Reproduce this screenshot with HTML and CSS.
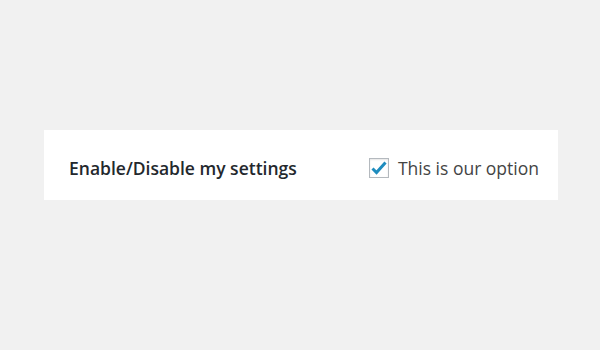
FILE: index.html
```html
<!DOCTYPE html>
<html>
<head>
<meta charset="utf-8">
<link rel="stylesheet" href="styles.css">
</head>
<body>
<div class="page">
  <div class="card">
    <div class="label">Enable/Disable my settings</div>
    <label class="option">
      <span class="checkbox">
        <svg width="16" height="14" viewBox="0 0 16 14"><path d="M1.5 7.5 L5.5 11.5 L14.5 1.5" fill="none" stroke="#1e8cbe" stroke-width="3" stroke-linejoin="miter"/></svg>
      </span>
      <span class="option-text">This is our option</span>
    </label>
  </div>
</div>
</body>
</html>
```
FILE: styles.css
```css
html, body {
  margin: 0;
  padding: 0;
  background: #f1f1f1;
}
.page {
  width: 600px;
  height: 350px;
  padding: 130px 42px 0 44px;
  box-sizing: border-box;
}
.card {
  background: #fff;
  height: 70px;
  box-sizing: border-box;
  display: flex;
  align-items: center;
  justify-content: space-between;
  padding: 6px 19px 0 25px;
  font-family: "Open Sans", sans-serif;
}
.label {
  font-weight: 600;
  font-size: 17.5px;
  color: #23282d;
}
.option {
  display: flex;
  align-items: center;
  gap: 9px;
}
.checkbox {
  width: 18px;
  height: 18px;
  border: 1px solid #b4b9be;
  background: #fff;
  box-shadow: inset 0 1px 2px rgba(0,0,0,0.1);
  display: flex;
  align-items: center;
  justify-content: center;
}
.option-text {
  font-size: 17.5px;
  color: #444;
}
```
